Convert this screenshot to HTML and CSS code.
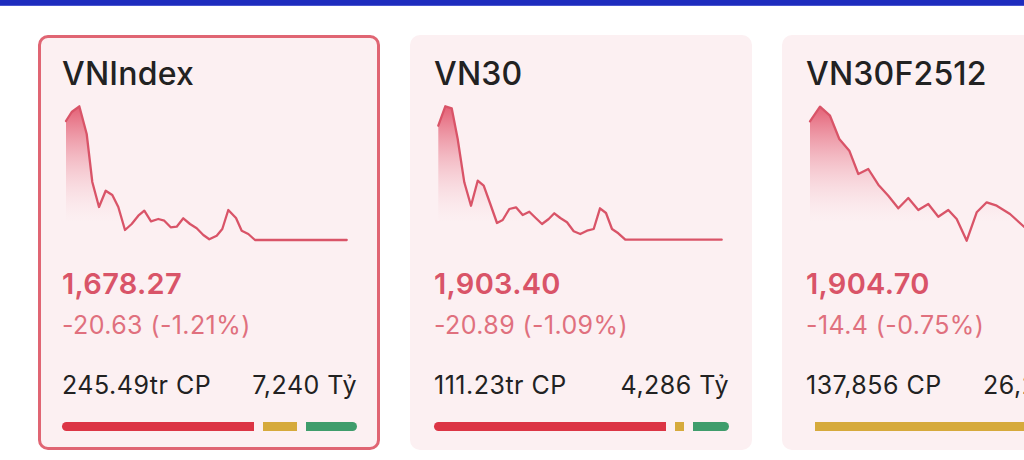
FILE: index.html
```html
<!DOCTYPE html>
<html lang="vi">
<head>
<meta charset="utf-8">
<title>Chỉ số thị trường</title>
<link rel="stylesheet" href="styles.css">
</head>
<body>
<div class="topbar"></div>
<div class="cards">
  <div class="card selected">
    <div class="title">VNIndex</div>
    <svg class="chart" width="295" height="173" viewBox="0 0 295 173">
      <defs>
        <linearGradient id="g1" gradientUnits="userSpaceOnUse" x1="0" y1="10" x2="0" y2="128">
          <stop offset="0" stop-color="#e04a62" stop-opacity="0.9"/>
          <stop offset="1" stop-color="#f6c9d1" stop-opacity="0"/>
        </linearGradient>
      </defs>
      <path class="area" fill="url(#g1)" d="M4,27 L9.7,18 L17.3,12.3 L24.7,40 L30.3,88 L37,113 L43.7,96.7 L50.3,101 L56.3,113 L63,136 L69.7,130 L76.3,121.7 L82.3,116.7 L89,127.3 L96.3,125 L102.3,126.7 L108.7,133.3 L114.7,132.7 L121.3,124.3 L128,130 L134.7,134.3 L141.3,141 L147.3,145.3 L154.7,141.7 L160.3,135 L166.3,116 L174,124 L179.7,136.7 L186.3,140 L193,146 L284.7,146 L284.7,150 L4,150 Z"/>
      <path class="line" d="M4,27 L9.7,18 L17.3,12.3 L24.7,40 L30.3,88 L37,113 L43.7,96.7 L50.3,101 L56.3,113 L63,136 L69.7,130 L76.3,121.7 L82.3,116.7 L89,127.3 L96.3,125 L102.3,126.7 L108.7,133.3 L114.7,132.7 L121.3,124.3 L128,130 L134.7,134.3 L141.3,141 L147.3,145.3 L154.7,141.7 L160.3,135 L166.3,116 L174,124 L179.7,136.7 L186.3,140 L193,146 L284.7,146"/>
    </svg>
    <div class="price">1,678.27</div>
    <div class="change">-20.63 (-1.21%)</div>
    <div class="stats"><span>245.49tr CP</span><span>7,240 Tỷ</span></div>
    <div class="breadth">
      <span class="seg down" style="flex-grow:191"></span>
      <span class="seg flat" style="flex-grow:34"></span>
      <span class="seg up" style="flex-grow:51"></span>
    </div>
  </div>

  <div class="card">
    <div class="title">VN30</div>
    <svg class="chart" width="295" height="173" viewBox="0 0 295 173">
      <defs>
        <linearGradient id="g2" gradientUnits="userSpaceOnUse" x1="0" y1="10" x2="0" y2="128">
          <stop offset="0" stop-color="#e04a62" stop-opacity="0.9"/>
          <stop offset="1" stop-color="#f6c9d1" stop-opacity="0"/>
        </linearGradient>
      </defs>
      <path class="area" fill="url(#g2)" d="M4.3,31.7 L11.3,12.3 L17.7,14.3 L23.7,45 L30.3,88.3 L37,111.7 L43.7,86.7 L49.7,91.7 L56.3,110 L63,129 L68.7,126 L75.3,115 L82,113.3 L88.7,121 L95.3,117.7 L102,124.3 L108,130 L114.7,125 L120.3,119.3 L126.3,124 L133,128.3 L139.7,137.3 L146.3,140 L153,136.7 L159.7,135 L166,114.3 L172,119 L178,135 L184.3,139.3 L191.3,145.7 L287.7,145.7 L287.7,150 L4.3,150 Z"/>
      <path class="line" d="M4.3,31.7 L11.3,12.3 L17.7,14.3 L23.7,45 L30.3,88.3 L37,111.7 L43.7,86.7 L49.7,91.7 L56.3,110 L63,129 L68.7,126 L75.3,115 L82,113.3 L88.7,121 L95.3,117.7 L102,124.3 L108,130 L114.7,125 L120.3,119.3 L126.3,124 L133,128.3 L139.7,137.3 L146.3,140 L153,136.7 L159.7,135 L166,114.3 L172,119 L178,135 L184.3,139.3 L191.3,145.7 L287.7,145.7"/>
    </svg>
    <div class="price">1,903.40</div>
    <div class="change">-20.89 (-1.09%)</div>
    <div class="stats"><span>111.23tr CP</span><span>4,286 Tỷ</span></div>
    <div class="breadth">
      <span class="seg down" style="flex-grow:232"></span>
      <span class="seg flat" style="flex-grow:9"></span>
      <span class="seg up" style="flex-grow:36"></span>
    </div>
  </div>

  <div class="card">
    <div class="title">VN30F2512</div>
    <svg class="chart" width="295" height="173" viewBox="0 0 295 173">
      <defs>
        <linearGradient id="g3" gradientUnits="userSpaceOnUse" x1="0" y1="10" x2="0" y2="128">
          <stop offset="0" stop-color="#e04a62" stop-opacity="0.9"/>
          <stop offset="1" stop-color="#f6c9d1" stop-opacity="0"/>
        </linearGradient>
      </defs>
      <path class="area" fill="url(#g3)" d="M4,27.3 L14,12.7 L24,21.7 L33.3,45 L43.3,56.7 L52.3,80 L62.3,75 L72.3,90.7 L82.3,101.7 L92.3,114.3 L102.3,104 L112.3,116 L122.3,110 L132.3,122.7 L142.3,116 L150.7,125 L160.7,146.7 L170.7,118.3 L180.7,108.3 L190.7,111.7 L204,120 L218,132.7 L232,142 L246,136 L246,150 L4,150 Z"/>
      <path class="line" d="M4,27.3 L14,12.7 L24,21.7 L33.3,45 L43.3,56.7 L52.3,80 L62.3,75 L72.3,90.7 L82.3,101.7 L92.3,114.3 L102.3,104 L112.3,116 L122.3,110 L132.3,122.7 L142.3,116 L150.7,125 L160.7,146.7 L170.7,118.3 L180.7,108.3 L190.7,111.7 L204,120 L218,132.7 L232,142 L246,136"/>
    </svg>
    <div class="price">1,904.70</div>
    <div class="change">-14.4 (-0.75%)</div>
    <div class="stats"><span>137,856 CP</span><span>26,215 Tỷ</span></div>
    <div class="breadth">
      <span class="seg down" style="flex-grow:0"></span>
      <span class="seg flat" style="flex-grow:286"></span>
    </div>
  </div>
</div>
</body>
</html>
```
FILE: styles.css
```css
* { box-sizing: border-box; }

html, body {
  margin: 0;
  padding: 0;
  background: #ffffff;
  overflow: hidden;
  width: 1024px;
  height: 460px;
}

body {
  font-family: "Inter", "Noto Sans", "DejaVu Sans", sans-serif;
  color: #222222;
}

.topbar {
  height: 6px;
  background: #1e2cbe;
  border-bottom: 1px solid #4a56cf;
}

.cards {
  display: flex;
  gap: 30px;
  padding-left: 38px;
  margin-top: 29px;
}

.card {
  flex: 0 0 342px;
  width: 342px;
  height: 415px;
  background: #fcf0f2;
  border: 3px solid transparent;
  border-radius: 10px;
  padding: 16px 20px 0 21px;
  display: flex;
  flex-direction: column;
}

.card.selected {
  border-color: #e06573;
}

.title {
  font-size: 32px;
  font-weight: 500;
  line-height: 40px;
  letter-spacing: 0.2px;
  color: #222222;
}

.chart {
  display: block;
  width: 295px;
  height: 173px;
  overflow: visible;
}

.chart .line {
  fill: none;
  stroke: #d95468;
  stroke-width: 2.3;
  stroke-linejoin: round;
  stroke-linecap: round;
}

.price {
  font-size: 29px;
  font-weight: 600;
  line-height: 34px;
  letter-spacing: 0.3px;
  color: #d95468;
}

.change {
  margin-top: 9px;
  font-size: 25px;
  font-weight: 400;
  line-height: 30px;
  letter-spacing: 0.4px;
  color: #e0707e;
}

.stats {
  margin-top: 30px;
  display: flex;
  justify-content: space-between;
  font-size: 25px;
  line-height: 30px;
  letter-spacing: 0.5px;
  color: #222222;
  white-space: nowrap;
}

.breadth {
  margin-top: 22px;
  display: flex;
  gap: 9px;
  height: 9px;
}

.seg {
  display: block;
  flex-basis: 0;
  flex-shrink: 1;
  height: 9px;
  min-width: 0;
}

.seg:first-child { border-radius: 5px 0 0 5px; }
.seg:last-child { border-radius: 0 5px 5px 0; }

.seg.down { background: #dc3545; }
.seg.flat { background: #d6aa3c; }
.seg.up { background: #3f9d6c; }
```
